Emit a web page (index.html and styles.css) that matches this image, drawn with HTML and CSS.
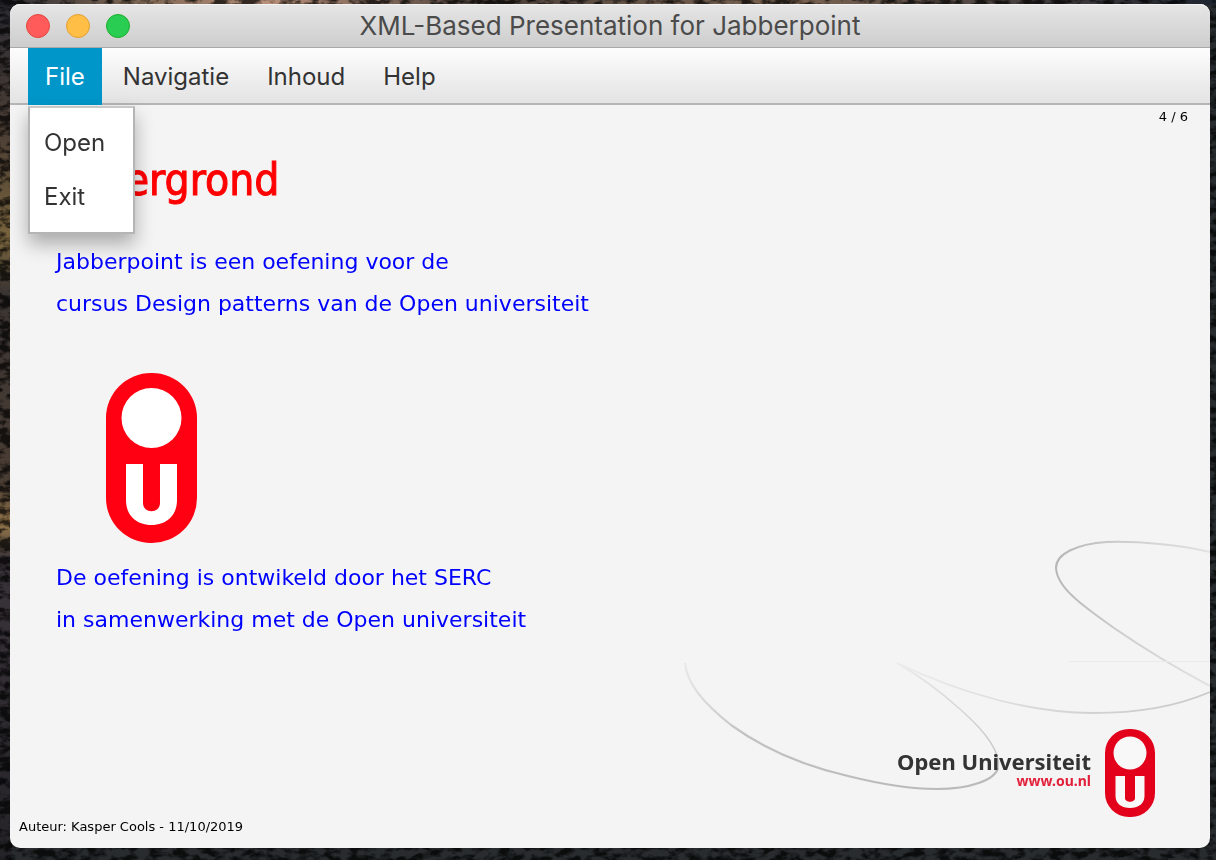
FILE: index.html
```html
<!DOCTYPE html>
<html lang="nl">
<head>
<meta charset="utf-8">
<title>XML-Based Presentation for Jabberpoint</title>
<link rel="stylesheet" href="styles.css">
</head>
<body>
<svg class="desktop" aria-hidden="true">
  <defs>
    <linearGradient id="ground" x1="0" y1="0" x2="0" y2="1">
      <stop offset="0" stop-color="#2c2c34"/>
      <stop offset=".15" stop-color="#4a3d34"/>
      <stop offset=".28" stop-color="#7a653e"/>
      <stop offset=".34" stop-color="#3a3432"/>
      <stop offset=".56" stop-color="#4a3d34"/>
      <stop offset=".61" stop-color="#94764a"/>
      <stop offset=".65" stop-color="#3a343a"/>
      <stop offset="1" stop-color="#242327"/>
    </linearGradient>
    <linearGradient id="ridge" x1="0" y1="0" x2="1" y2="0">
      <stop offset="0" stop-color="#2a2b34"/>
      <stop offset=".1" stop-color="#75614f"/>
      <stop offset=".22" stop-color="#b8907a"/>
      <stop offset=".4" stop-color="#4d423c"/>
      <stop offset=".65" stop-color="#7a6351"/>
      <stop offset="1" stop-color="#1e2430"/>
    </linearGradient>
    <filter id="rock" x="0" y="0" width="100%" height="100%">
      <feTurbulence type="fractalNoise" baseFrequency=".08 .14" numOctaves="4" seed="8"/>
      <feColorMatrix values="0 0 0 0 0  0 0 0 0 0  0 0 0 0 0  4 0 0 0 -1.6"/>
    </filter>
  </defs>
  <rect width="100%" height="100%" fill="#282c2e"/>
  <rect width="12" height="100%" fill="url(#ground)"/>
  <rect width="100%" height="5" fill="url(#ridge)"/>
  <rect width="100%" height="100%" filter="url(#rock)" opacity=".7"/>
</svg>

<main class="window">
  <header class="titlebar">
    <div class="lights">
      <button class="light close" aria-label="Close"></button>
      <button class="light minimize" aria-label="Minimize"></button>
      <button class="light zoom" aria-label="Zoom"></button>
    </div>
    <h1 class="window-title">XML-Based Presentation for Jabberpoint</h1>
  </header>

  <nav class="menubar">
    <div class="menu">
      <button class="menu-button active" aria-expanded="true">File</button>
      <div class="dropdown">
        <button class="menu-item">Open</button>
        <button class="menu-item">Exit</button>
      </div>
    </div>
    <div class="menu"><button class="menu-button">Navigatie</button></div>
    <div class="menu"><button class="menu-button">Inhoud</button></div>
    <div class="menu"><button class="menu-button">Help</button></div>
  </nav>

  <section class="slide">
    <svg class="swirls" viewBox="0 0 550 328" fill="none" aria-hidden="true">
      <defs>
        <linearGradient id="loop" gradientUnits="userSpaceOnUse" x1="25" y1="143" x2="240" y2="272">
          <stop offset="0" stop-color="#e8e8e8"/>
          <stop offset=".35" stop-color="#c2c2c2"/>
          <stop offset="1" stop-color="#bababa"/>
        </linearGradient>
        <linearGradient id="rise" gradientUnits="userSpaceOnUse" x1="237" y1="143" x2="338" y2="248">
          <stop offset="0" stop-color="#eaeaea"/>
          <stop offset="1" stop-color="#c4c4c4"/>
        </linearGradient>
        <linearGradient id="bowl" gradientUnits="userSpaceOnUse" x1="237" y1="0" x2="550" y2="0">
          <stop offset="0" stop-color="#ececec"/>
          <stop offset=".6" stop-color="#d2d2d2"/>
          <stop offset="1" stop-color="#cacaca"/>
        </linearGradient>
        <linearGradient id="hook" gradientUnits="userSpaceOnUse" x1="396" y1="0" x2="550" y2="0">
          <stop offset="0" stop-color="#b6b6b6"/>
          <stop offset=".45" stop-color="#cecece"/>
          <stop offset="1" stop-color="#e2e2e2"/>
        </linearGradient>
      </defs>
      <path stroke="url(#loop)" stroke-width="2.2" d="M25 143C27 163 42 182 71 205C104 229 145 246 188 256C220 264 250 269 277 269C310 269 335 260 338 248"/>
      <path stroke="url(#rise)" stroke-width="1.6" d="M338 248C341 232 327 213 301 190C282 173 262 157 237 143"/>
      <path stroke="url(#bowl)" stroke-width="1.8" d="M237 143C300 173 370 193 433 193C478 193 514 187 550 172"/>
      <path stroke="url(#hook)" stroke-width="2" d="M550 32C520 25 480 21 447 22C416 24 396 34 396 48C397 68 423 86 454 108C483 128 518 149 550 166"/>
      <path stroke="#ebebeb" d="M408 141.500H550"/>
    </svg>

    <p class="page-number">4 / 6</p>
    <h2 class="slide-title">Achtergrond</h2>
    <p class="slide-text">Jabberpoint is een oefening voor de<br>cursus Design patterns van de Open universiteit</p>
    <svg class="slide-logo" viewBox="0 0 91 170" role="img" aria-label="Open Universiteit">
      <rect width="91" height="170" rx="45" fill="#ff0012"/>
      <circle cx="45.500" cy="45" r="30" fill="#fff"/>
      <path fill="#fff" d="M20 91H37V130C37 141 54 141 54 130V91H71V127C71 143 60 152 45.500 152S20 143 20 127Z"/>
    </svg>
    <p class="slide-text">De oefening is ontwikeld door het SERC<br>in samenwerking met de Open universiteit</p>

    <div class="brand">
      <div class="brand-text">
        <strong class="brand-name">Open Universiteit</strong>
        <a class="brand-link" href="http://www.ou.nl">www.ou.nl</a>
      </div>
      <svg class="brand-logo" viewBox="0 0 50 88" aria-hidden="true">
        <rect width="50" height="88" rx="24" fill="#e2001a"/>
        <circle cx="25" cy="24" r="16.500" fill="#f8f8f8"/>
        <path fill="#f8f8f8" d="M10.500 47H20V69C20 74 30 74 30 69V47H39.500V67C39.500 75 33 79 25 79S10.500 75 10.500 67Z"/>
      </svg>
    </div>
    <footer class="author">Auteur: Kasper Cools - 11/10/2019</footer>
  </section>
</main>
</body>
</html>
```

FILE: styles.css
```css
* {
  box-sizing: border-box;
}

body {
  margin: 0;
  min-height: 100vh;
  display: flex;
  padding: 4px 6px 12px 10px;
  background: #1b1c1f;
  font-family: "DejaVu Sans", Verdana, sans-serif;
}

h1, h2, p {
  margin: 0;
  font-weight: 400;
}

button {
  margin: 0;
  border: 0;
  padding: 0;
  background: none;
  color: inherit;
  font: inherit;
  text-align: left;
}

.desktop {
  position: fixed;
  inset: 0;
  width: 100%;
  height: 100%;
}

.window {
  position: relative;
  flex: 1;
  display: flex;
  flex-direction: column;
  border-radius: 10px;
  background: #f4f4f4;
}

.titlebar {
  display: grid;
  grid-template-columns: 1fr auto 1fr;
  align-items: center;
  height: 44px;
  padding: 0 16px;
  border-bottom: 1px solid #a9a9a9;
  border-radius: 10px 10px 0 0;
  background: linear-gradient(#e6e6e6, #cdcdcd);
  box-shadow: inset 0 1px #f3f3f3;
}

.lights {
  display: flex;
  gap: 16px;
}

.light {
  width: 24px;
  height: 24px;
  border: 1px solid;
  border-radius: 50%;
}

.close {
  background: #ff5b5a;
  border-color: #e2463f;
}

.minimize {
  background: #ffbe45;
  border-color: #e0a033;
}

.zoom {
  background: #28cd52;
  border-color: #1dad2b;
}

.window-title {
  color: #4b4b4b;
  font: 26px/32px Inter, sans-serif;
}

.menubar {
  display: flex;
  gap: 4px;
  height: 57px;
  padding-left: 18px;
  border-bottom: 2px solid #b5b5b5;
  background: linear-gradient(#fdfdfd, #e3e3e3);
  color: #333;
  font: 24px/32px Inter, sans-serif;
}

.menu {
  position: relative;
}

.menu-button {
  height: 57px;
  padding: 0 17px;
}

.active {
  background: #0096c9;
  color: #fff;
}

.dropdown {
  position: absolute;
  z-index: 1;
  top: 58px;
  left: 0;
  display: flex;
  flex-direction: column;
  padding: 8px 0;
  border: 2px solid #b5b5b5;
  border-top-color: #c8c8c8;
  background: #fff;
  box-shadow: 0 10px 18px rgba(0, 0, 0, .3);
}

.menu-item {
  height: 54px;
  padding: 0 28px 0 14px;
}

.slide {
  position: relative;
  flex: 1;
  display: flex;
  flex-direction: column;
}

.swirls {
  position: absolute;
  right: 0;
  bottom: 0;
  width: 550px;
  height: 328px;
}

.page-number {
  padding: 2px 22px 0 0;
  color: #000;
  font-size: 13px;
  line-height: 20px;
  text-align: right;
}

.slide-title {
  padding: 24px 0 32px 26px;
  color: #f00;
  font: 44px/58px "DejaVu Sans Condensed", "DejaVu Sans", sans-serif;
  -webkit-text-stroke: 1px #f00;
}

.slide-text {
  padding-left: 46px;
  color: #00f;
  font-size: 22px;
  line-height: 42px;
}

.slide-logo {
  width: 91px;
  height: 170px;
  margin: 48px 0 14px 96px;
}

.brand {
  position: relative;
  display: flex;
  justify-content: flex-end;
  align-items: center;
  gap: 14px;
  margin-top: auto;
  padding-right: 55px;
}

.brand-text {
  display: flex;
  flex-direction: column;
  align-items: flex-end;
  padding-bottom: 8px;
  font-family: "Noto Sans", sans-serif;
}

.brand-name {
  color: #333;
  font-size: 22px;
  line-height: 24px;
}

.brand-link {
  color: #e2203a;
  font-size: 14px;
  font-weight: 700;
  line-height: 16px;
  text-decoration: none;
}

.brand-logo {
  width: 50px;
  height: 88px;
}

.author {
  padding: 0 9px 11px;
  color: #000;
  font-size: 13px;
  line-height: 20px;
}
```
